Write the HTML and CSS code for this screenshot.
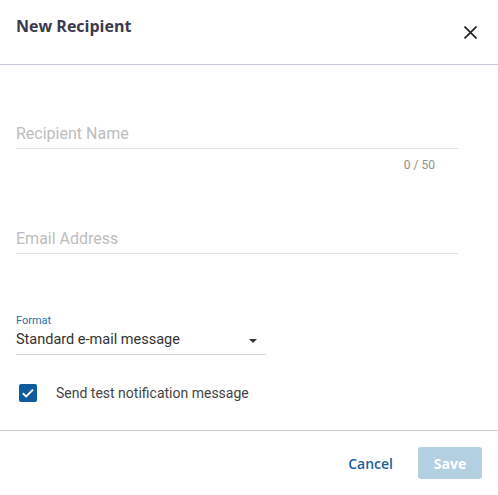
FILE: index.html
```html
<!DOCTYPE html>
<html>
<head>
<meta charset="utf-8">
<link rel="stylesheet" href="styles.css">
</head>
<body>
<div class="dialog">
  <header class="header">
    <h1 class="title">New Recipient</h1>
    <button class="close" aria-label="Close">
      <svg width="13" height="13" viewBox="0 0 13 13"><path d="M0.5 0.5 L12.5 12.5 M12.5 0.5 L0.5 12.5" stroke="#1f1f1f" stroke-width="1.6" fill="none"/></svg>
    </button>
  </header>
  <main class="content">
    <div class="field field-name">
      <div class="input placeholder">Recipient Name</div>
    </div>
    <div class="counter">0 / 50</div>
    <div class="field field-email">
      <div class="input placeholder">Email Address</div>
    </div>
    <div class="select-wrap">
      <div class="select-label">Format</div>
      <div class="select">
        <span class="select-value">Standard e-mail message</span>
        <span class="arrow"></span>
      </div>
    </div>
    <label class="check-row">
      <svg class="checkbox" width="18" height="18" viewBox="0 0 18 18"><rect x="0" y="0" width="18" height="18" rx="2" fill="#0f5c9d"/><path d="M3.8 9.2 L7.2 12.4 L14 5.6" stroke="#fff" stroke-width="2" fill="none"/></svg>
      <span class="check-label">Send test notification message</span>
    </label>
  </main>
  <footer class="footer">
    <button class="btn btn-cancel">Cancel</button>
    <button class="btn btn-save">Save</button>
  </footer>
</div>
</body>
</html>
```
FILE: styles.css
```css
html, body {
  margin: 0;
  padding: 0;
  background: #ffffff;
}
.dialog {
  width: 498px;
  height: 495px;
  display: flex;
  flex-direction: column;
  font-family: Roboto, "Noto Sans", sans-serif;
}
.header {
  height: 65px;
  box-sizing: border-box;
  border-bottom: 1px solid #cbcbda;
  display: flex;
  justify-content: space-between;
  align-items: flex-start;
  padding: 14px 21px 0 16px;
}
.title {
  margin: 0;
  font-family: "Open Sans", sans-serif;
  font-weight: 700;
  font-size: 16px;
  line-height: 24px;
  color: #3a3a4c;
}
.close {
  border: 0;
  background: none;
  padding: 0;
  margin-top: 12px;
  width: 13px;
  height: 13px;
  display: block;
}
.close svg { display: block; }
.content {
  padding: 0 40px 0 16px;
  display: flex;
  flex-direction: column;
}
.field {
  border-bottom: 1px solid #e0e0e0;
  padding-bottom: 2px;
}
.field-name { margin-top: 57px; }
.field-email { margin-top: 54px; }
.input {
  height: 24px;
  line-height: 24px;
  font-size: 16px;
}
.placeholder { color: #bdbdbd; }
.counter {
  margin-top: 8px;
  font-size: 12px;
  line-height: 16px;
  color: #8e8e8e;
  text-align: right;
  padding-right: 23px;
}
.select-wrap {
  margin-top: 60px;
  width: 250px;
}
.select-label {
  font-size: 11px;
  line-height: 14px;
  color: #1f6fb2;
}
.select {
  margin-top: 2px;
  height: 20px;
  padding-bottom: 4px;
  border-bottom: 1px solid #d6d6d6;
  display: flex;
  align-items: center;
  justify-content: space-between;
  padding-right: 9px;
}
.select-value {
  font-size: 14.5px;
  line-height: 20px;
  color: #333333;
}
.arrow {
  width: 0;
  height: 0;
  border-left: 4px solid transparent;
  border-right: 4px solid transparent;
  border-top: 4px solid #333333;
  margin-top: 2px;
}
.check-row {
  margin-top: 29px;
  height: 18px;
  display: flex;
  align-items: center;
  padding-left: 3px;
}
.checkbox { display: block; flex: none; }
.check-label {
  margin-left: 19px;
  font-size: 14px;
  color: #444444;
}
.footer {
  margin-top: 28px;
  border-top: 1px solid #cdcbdc;
  padding: 16px 16px 16px 0;
  display: flex;
  justify-content: flex-end;
  align-items: center;
}
.btn {
  font-family: "Open Sans", sans-serif;
  font-weight: 600;
  font-size: 14px;
  border: 0;
  height: 32px;
  border-radius: 3px;
  cursor: pointer;
}
.btn-cancel {
  background: none;
  color: #1a5f9c;
  padding: 0;
  margin-right: 25px;
}
.btn-save {
  background: #b3cfe2;
  color: #ffffff;
  width: 64px;
  font-weight: 700;
}
```
